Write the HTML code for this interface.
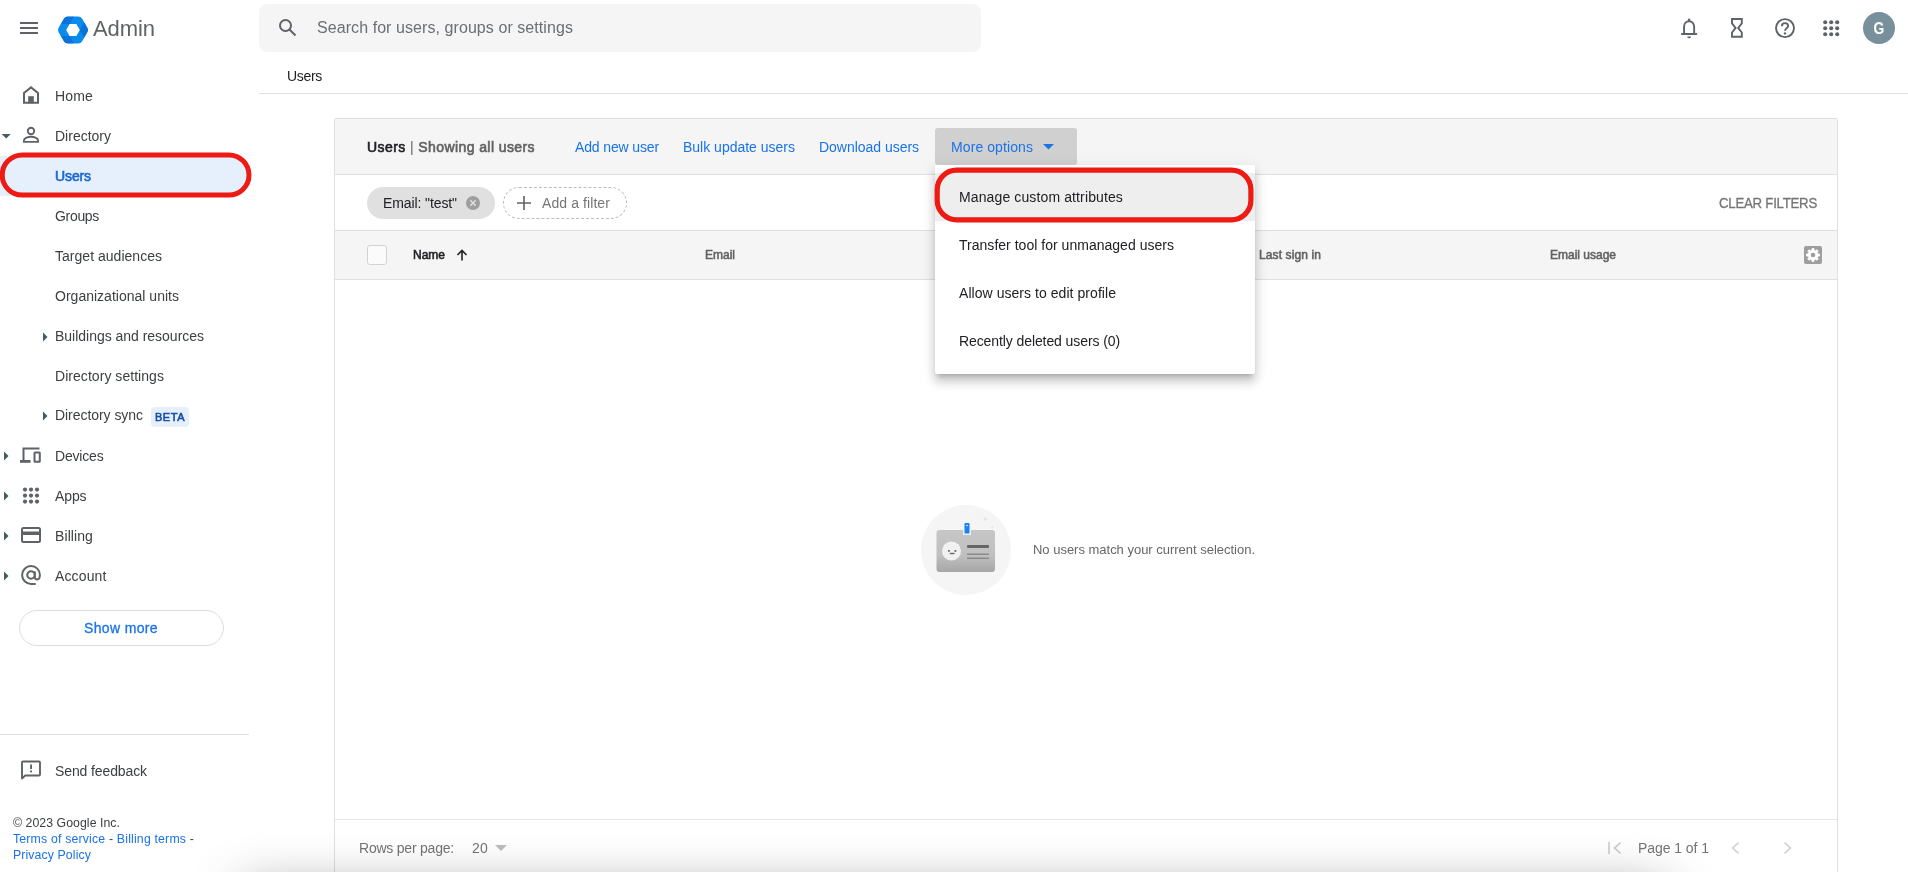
<!DOCTYPE html>
<html><head><meta charset="utf-8">
<style>
*{box-sizing:border-box;margin:0;padding:0}
html,body{width:1908px;height:872px;overflow:hidden;background:#fff;font-family:"Liberation Sans",sans-serif;color:#3c4043}
.abs{position:absolute}
.t{position:absolute;white-space:nowrap;line-height:1}
svg{position:absolute;overflow:visible}
.nav{font-size:14px;color:#3c4043}
.link{color:#1a73e8;font-size:14px}
.hdr{font-size:12px;color:#616161;-webkit-text-stroke:.55px currentColor}
.med{-webkit-text-stroke:.6px currentColor}
.mi{font-size:14px;color:#202124}
#root{position:absolute;left:0;top:0;width:1908px;height:872px;will-change:transform;overflow:hidden}
</style></head><body><div id="root">
<!-- top bar -->
<svg style="left:20px;top:22px" width="18" height="12"><path d="M0 1h18M0 6h18M0 11h18" stroke="#5f6368" stroke-width="2"/></svg>
<svg id="logo" style="left:57px;top:14.900px" width="32" height="30" viewBox="0 0 32 30"><defs><clipPath id="lc"><path d="M1.60 17.25Q0.30 15.00 1.60 12.75L6.85 3.66Q8.15 1.40 10.75 1.40L21.25 1.40Q23.85 1.40 25.15 3.66L30.40 12.75Q31.70 15.00 30.40 17.25L25.15 26.34Q23.85 28.60 21.25 28.60L10.75 28.60Q8.15 28.60 6.85 26.34Z"/></clipPath></defs><g clip-path="url(#lc)"><rect width="32" height="30" fill="#0c8bef"/><path d="M8.15 1.40L17.05 1.40L12.60 9.11L3.70 9.11Z M31.70 15.00L27.25 22.71L22.80 15.00L27.25 7.29Z M8.15 28.60L3.70 20.89L12.60 20.89L17.05 28.60Z" fill="#0a72d8"/></g><path d="M9.20 15.00L12.60 9.11L19.40 9.11L22.80 15.00L19.40 20.89L12.60 20.89Z" fill="#fff"/></svg>
<div class="t" style="letter-spacing:-0.072px;left:93px;top:18px;font-size:22px;color:#5f6368">Admin</div>
<div class="abs" style="left:259px;top:4px;width:722px;height:48px;background:#f5f5f5;border-radius:8px"></div>
<svg style="left:278px;top:18px" width="20" height="20" viewBox="0 0 20 20"><circle cx="7.5" cy="7.5" r="5.5" fill="none" stroke="#5f6368" stroke-width="2"/><path d="M11.5 11.5l6 6" stroke="#5f6368" stroke-width="2"/></svg>
<div class="t" style="letter-spacing:0.071px;left:317px;top:20px;font-size:16px;color:#6b6f73">Search for users, groups or settings</div>

<!-- top-right icons -->
<svg id="bell" style="left:1679px;top:17px" width="20" height="22" viewBox="0 0 20 22"><path d="M10.100 4.200c-3 0-5.050 2.400-5.050 5.600V17h10.100V9.800c0-3.200-2.050-5.600-5.050-5.600z" fill="none" stroke="#5f6368" stroke-width="1.900"/><path d="M2.100 17h16" stroke="#5f6368" stroke-width="1.900"/><circle cx="10.100" cy="2.700" r="1.300" fill="#5f6368"/><path d="M8.200 19.400h3.800a1.900 1.900 0 0 1-3.800 0z" fill="#5f6368"/></svg>
<svg id="hour" style="left:1731.300px;top:18.200px" width="12" height="20" viewBox="0 0 12 20"><path d="M1 1h9.800v4.300l-3.600 4.600 3.600 4.600v4.300H1v-4.300l3.600-4.600L1 5.300z" fill="none" stroke="#5f6368" stroke-width="1.900" stroke-linejoin="miter"/></svg>
<svg id="help" style="left:1774px;top:18px" width="22" height="22" viewBox="0 0 22 22"><circle cx="11" cy="10.100" r="9" fill="none" stroke="#5f6368" stroke-width="1.900"/><path d="M7.900 8.200c0-1.900 1.400-3.100 3.100-3.100s3.100 1.200 3.100 2.800c0 2.200-3.100 2.500-3.100 4.900" fill="none" stroke="#5f6368" stroke-width="1.900"/><circle cx="11" cy="15.400" r="1.200" fill="#5f6368"/></svg>
<svg id="grid" style="left:1822px;top:19px" width="18" height="18" viewBox="0 0 18 18" fill="#5f6368"><circle cx="3.2" cy="3.2" r="2.050"/><circle cx="9.2" cy="3.2" r="2.050"/><circle cx="15.2" cy="3.2" r="2.050"/><circle cx="3.2" cy="9.2" r="2.050"/><circle cx="9.2" cy="9.2" r="2.050"/><circle cx="15.2" cy="9.2" r="2.050"/><circle cx="3.2" cy="15.2" r="2.050"/><circle cx="9.2" cy="15.2" r="2.050"/><circle cx="15.2" cy="15.2" r="2.050"/></svg>
<div class="abs" style="left:1863px;top:12px;width:32px;height:32px;border-radius:50%;background:#78909c"></div>
<div class="abs" style="left:1863px;top:12px;width:32px;height:32px;line-height:32px;text-align:center;font-size:16.500px;font-weight:bold;color:#fff;transform:scaleX(.84)">G</div>

<!-- breadcrumb -->
<div class="t" style="letter-spacing:-0.312px;left:287px;top:69px;font-size:14px;color:#202124">Users</div>
<div class="abs" style="left:259px;top:93px;width:1649px;height:1px;background:#e0e0e0"></div>

<!-- sidebar -->

<!-- Users highlight -->
<div class="abs" style="left:0;top:156px;width:248px;height:40px;background:#e5f0fc;border-radius:0 20px 20px 0"></div>
<svg style="left:0;top:150px" width="256" height="50"><rect x="2.2" y="4.900" width="246.800" height="40.200" rx="20.100" fill="none" stroke="#ee1a14" stroke-width="5"/></svg>
<!-- Home -->
<svg id="home" style="left:23px;top:86px" width="16" height="18" viewBox="0 0 16 18"><path d="M1 16.700V7L8 1.400l7 5.600v9.700z" fill="none" stroke="#5f6368" stroke-width="2" stroke-linejoin="miter"/><rect x="5.200" y="10.200" width="5.600" height="7" fill="#5f6368"/></svg>
<div class="t nav" style="letter-spacing:0.160px;left:55px;top:89px">Home</div>
<!-- Directory -->
<svg style="left:1px;top:134px" width="11" height="5"><path d="M.7 0h9L5.200 4.500z" fill="#455a64"/></svg>
<svg id="person" style="left:22px;top:126px" width="18" height="18" viewBox="0 0 18 18"><circle cx="9" cy="5" r="3.200" fill="none" stroke="#5f6368" stroke-width="1.900"/><path d="M1.900 15.900v-1.400c0-2.500 4.700-3.700 7.100-3.700s7.100 1.200 7.100 3.700v1.400z" fill="none" stroke="#5f6368" stroke-width="1.900" stroke-linejoin="round"/></svg>
<div class="t nav" style="letter-spacing:-0.002px;left:55px;top:129px">Directory</div>
<div class="t" style="letter-spacing:-0.113px;left:55px;top:169px;font-size:14px;color:#1967d2;-webkit-text-stroke:.6px #1967d2">Users</div>
<div class="t nav" style="letter-spacing:-0.320px;left:55px;top:209px">Groups</div>
<div class="t nav" style="letter-spacing:0.022px;left:55px;top:249px">Target audiences</div>
<div class="t nav" style="letter-spacing:0.013px;left:55px;top:289px">Organizational units</div>
<svg style="left:43px;top:332px" width="5" height="10"><path d="M0 .5v9l4.500-4.500z" fill="#455a64"/></svg>
<div class="t nav" style="letter-spacing:-0.018px;left:55px;top:329px">Buildings and resources</div>
<div class="t nav" style="letter-spacing:0.047px;left:55px;top:369px">Directory settings</div>
<svg style="left:43px;top:411px" width="5" height="10"><path d="M0 .5v9l4.500-4.500z" fill="#455a64"/></svg>
<div class="t nav" style="letter-spacing:-0.049px;left:55px;top:408px">Directory sync</div>
<div class="abs" style="left:151px;top:407px;width:38px;height:20px;background:#e5f0fc;border-radius:4px"></div>
<div class="t" style="letter-spacing:0.520px;left:155px;top:412px;font-size:11px;color:#1449a8;-webkit-text-stroke:.55px #1449a8">BETA</div>
<!-- Devices -->
<svg style="left:4px;top:451px" width="5" height="10"><path d="M0 .5v9l4.500-4.500z" fill="#455a64"/></svg>
<svg id="dev" style="left:20px;top:447px" width="22" height="17" viewBox="0 0 22 17"><path d="M3.500 13V1.500H19.500" fill="none" stroke="#5f6368" stroke-width="2"/><path d="M0 14.400h10.500" stroke="#5f6368" stroke-width="2.800"/><rect x="14.500" y="5.600" width="5.300" height="9.200" rx=".5" fill="none" stroke="#5f6368" stroke-width="2"/></svg>
<div class="t nav" style="letter-spacing:-0.185px;left:55px;top:449px">Devices</div>
<!-- Apps -->
<svg style="left:4px;top:491px" width="5" height="10"><path d="M0 .5v9l4.500-4.500z" fill="#455a64"/></svg>
<svg id="apps" style="left:22px;top:487px" width="18" height="18" viewBox="0 0 18 18" fill="#5f6368"><circle cx="3.0" cy="2.6" r="2.100"/><circle cx="9.0" cy="2.6" r="2.100"/><circle cx="15.0" cy="2.6" r="2.100"/><circle cx="3.0" cy="8.6" r="2.100"/><circle cx="9.0" cy="8.6" r="2.100"/><circle cx="15.0" cy="8.6" r="2.100"/><circle cx="3.0" cy="14.6" r="2.100"/><circle cx="9.0" cy="14.6" r="2.100"/><circle cx="15.0" cy="14.6" r="2.100"/></svg>
<div class="t nav" style="letter-spacing:-0.105px;left:55px;top:489px">Apps</div>
<!-- Billing -->
<svg style="left:4px;top:531px" width="5" height="10"><path d="M0 .5v9l4.500-4.500z" fill="#455a64"/></svg>
<svg id="bill" style="left:21px;top:527px" width="20" height="16" viewBox="0 0 20 16"><rect x="1" y="1" width="18" height="14" rx="1.500" fill="none" stroke="#5f6368" stroke-width="2"/><rect x="1" y="4.500" width="18" height="3.500" fill="#5f6368"/></svg>
<div class="t nav" style="letter-spacing:0.092px;left:55px;top:529px">Billing</div>
<!-- Account -->
<svg style="left:4px;top:571px" width="5" height="10"><path d="M0 .5v9l4.500-4.500z" fill="#455a64"/></svg>
<svg id="acct" style="left:20px;top:564px" width="22" height="22" viewBox="-0.5 -0.5 21 21"><circle cx="10" cy="10" r="3.600" fill="none" stroke="#5f6368" stroke-width="1.900"/><path d="M13.600 6.500v5.200c0 1.600 1 2.500 2.300 2.500 1.500 0 2.600-1.300 2.600-4.200 0-4.800-3.800-8.500-8.500-8.500S1.500 5.300 1.500 10s3.800 8.500 8.500 8.500h4.500" fill="none" stroke="#5f6368" stroke-width="1.900"/></svg>
<div class="t nav" style="letter-spacing:0.129px;left:55px;top:569px">Account</div>
<!-- Show more -->
<div class="abs" style="left:19px;top:610px;width:205px;height:36px;border:1px solid #dadce0;border-radius:18px"></div>
<div class="t" style="letter-spacing:0.354px;left:84px;top:621px;font-size:14px;color:#1a73e8;-webkit-text-stroke:.3px #1a73e8">Show more</div>
<!-- divider -->
<div class="abs" style="left:0;top:734px;width:249px;height:1px;background:#e0e0e0"></div>
<svg id="fb" style="left:21px;top:760px" width="20" height="20" viewBox="0 0 20 20"><path d="M1 18.500V2.500a1 1 0 0 1 1-1h16a1 1 0 0 1 1 1v12a1 1 0 0 1-1 1H4.200z" fill="none" stroke="#5f6368" stroke-width="1.900" stroke-linejoin="round"/><rect x="9.100" y="4.500" width="1.900" height="4.500" fill="#5f6368"/><rect x="9.100" y="10.500" width="1.900" height="1.900" fill="#5f6368"/></svg>
<div class="t nav" style="letter-spacing:-0.108px;left:55px;top:764px">Send feedback</div>
<div class="t" style="letter-spacing:0.048px;left:13px;top:817px;font-size:12.300px;color:#3c4043">© 2023 Google Inc.</div>
<div class="t" style="letter-spacing:0.178px;left:13px;top:833px;font-size:12.300px;color:#3c4043"><span style="color:#1a73e8">Terms of service</span> - <span style="color:#1a73e8">Billing terms</span> -</div>
<div class="t" style="letter-spacing:0.104px;left:13px;top:849px;font-size:12.300px;color:#1a73e8">Privacy Policy</div>


<!-- main card -->

<div class="abs" style="left:334px;top:118px;width:1504px;height:760px;border:1px solid #e0e0e0;border-radius:2px 2px 0 0;background:#fff"></div>
<div class="abs" style="left:335px;top:119px;width:1502px;height:55px;background:#f5f5f5"></div>
<div class="abs" style="left:335px;top:174px;width:1502px;height:1px;background:#e0e0e0"></div>
<div class="abs" style="left:335px;top:230px;width:1502px;height:1px;background:#e0e0e0"></div>
<div class="abs" style="left:335px;top:231px;width:1502px;height:48px;background:#f5f5f5"></div>
<div class="abs" style="left:335px;top:279px;width:1502px;height:1px;background:#e0e0e0"></div>
<div class="abs" style="left:335px;top:819px;width:1502px;height:1px;background:#e6e6e6"></div>
<!-- header row -->
<div class="t" style="letter-spacing:0.411px;left:367px;top:140px;font-size:14px;color:#616161"><span class="med" style="color:#202124">Users</span> | <span class="med">Showing all users</span></div>
<div class="t link" style="letter-spacing:-0.134px;left:575px;top:140px">Add new user</div>
<div class="t link" style="letter-spacing:-0.005px;left:683px;top:140px">Bulk update users</div>
<div class="t link" style="letter-spacing:-0.028px;left:819px;top:140px">Download users</div>
<div class="abs" style="left:935px;top:128px;width:142px;height:37px;background:#d0d0d0;border-radius:3px"></div>
<div class="t link" style="letter-spacing:0.089px;left:951px;top:140px">More options</div>
<svg style="left:1043px;top:144px" width="11" height="6"><path d="M0 0h11L5.500 5.500z" fill="#1a73e8"/></svg>
<!-- filter row -->
<div class="abs" style="left:367px;top:187px;width:128px;height:32px;background:#e0e0e0;border-radius:16px"></div>
<div class="t" style="letter-spacing:-0.100px;left:383px;top:196px;font-size:14px;color:#202124">Email: "test"</div>
<svg style="left:466px;top:196px" width="14" height="14" viewBox="0 0 14 14"><circle cx="7" cy="7" r="7" fill="#9e9e9e"/><path d="M4.300 4.300l5.400 5.400M9.700 4.300l-5.400 5.400" stroke="#e0e0e0" stroke-width="1.500"/></svg>
<div class="abs" style="left:503px;top:187px;width:124px;height:32px;border:1px dashed #bdbdbd;border-radius:16px"></div>
<svg style="left:517px;top:196px" width="14" height="14"><path d="M7 0v14M0 7h14" stroke="#616161" stroke-width="1.600"/></svg>
<div class="t" style="letter-spacing:0.089px;left:542px;top:196px;font-size:14px;color:#757575">Add a filter</div>
<div class="t" style="letter-spacing:-0.250px;transform:scaleX(0.9436);transform-origin:0 0;left:1719px;top:196px;font-size:14px;color:#757575;font-weight:normal;-webkit-text-stroke:.3px #757575">CLEAR FILTERS</div>
<!-- table header -->
<div class="abs" style="left:367px;top:245px;width:20px;height:20px;border:1.500px solid #d2d2d2;border-radius:3px;background:#fbfbfb"></div>
<div class="t hdr" style="letter-spacing:-0.004px;left:413px;top:249px;color:#202124">Name</div>
<svg style="left:456px;top:249px" width="12" height="12" viewBox="0 0 12 12"><path d="M6 11.500V1.500M1.500 6L6 1.500 10.500 6" fill="none" stroke="#202124" stroke-width="1.600"/></svg>
<div class="t hdr" style="letter-spacing:-0.003px;left:705px;top:249px">Email</div>
<div class="t hdr" style="letter-spacing:0.108px;left:1259px;top:249px">Last sign in</div>
<div class="t hdr" style="letter-spacing:-0.004px;left:1550px;top:249px">Email usage</div>
<svg id="gear" style="left:1804px;top:246px" width="18" height="18" viewBox="0 0 18 18"><rect width="18" height="18" rx="2" fill="#9e9e9e"/><path d="M13.76 7.86L15.53 8.02L15.53 9.98L13.76 10.14L13.18 11.56L14.31 12.92L12.92 14.31L11.56 13.18L10.14 13.76L9.98 15.53L8.02 15.53L7.86 13.76L6.44 13.18L5.08 14.31L3.69 12.92L4.82 11.56L4.24 10.14L2.47 9.98L2.47 8.02L4.24 7.86L4.82 6.44L3.69 5.08L5.08 3.69L6.44 4.82L7.86 4.24L8.02 2.47L9.98 2.47L10.14 4.24L11.56 4.82L12.92 3.69L14.31 5.08L13.18 6.44Z" fill="#fff" stroke="#fff" stroke-width=".8" stroke-linejoin="round"/><circle cx="9" cy="9" r="2.300" fill="#9e9e9e"/></svg>
<!-- dropdown -->
<div class="abs" style="left:935px;top:165px;width:320px;height:209px;background:#fff;border-radius:2px;box-shadow:0 5px 5px -3px rgba(0,0,0,.2),0 8px 10px 1px rgba(0,0,0,.14),0 3px 14px 2px rgba(0,0,0,.08)"></div>
<div class="abs" style="left:935px;top:173px;width:320px;height:48px;background:#eeeeee"></div>
<svg style="left:930px;top:160px" width="330" height="70"><rect x="7.200" y="10.100" width="313.700" height="49.700" rx="19.500" fill="none" stroke="#ee1a14" stroke-width="5.200"/></svg>
<div class="t mi" style="letter-spacing:0.121px;left:959px;top:190px">Manage custom attributes</div>
<div class="t mi" style="letter-spacing:0.022px;left:959px;top:238px">Transfer tool for unmanaged users</div>
<div class="t mi" style="letter-spacing:0.050px;left:959px;top:286px">Allow users to edit profile</div>
<div class="t mi" style="letter-spacing:-0.093px;left:959px;top:334px">Recently deleted users (0)</div>
<!-- empty state -->
<div class="abs" style="left:921px;top:505px;width:90px;height:90px;border-radius:50%;background:#f5f5f5"></div>
<svg style="left:982px;top:516px" width="14" height="14" viewBox="0 0 14 14"><path d="M3.300 .8l.7 1.800 1.800.7-1.800.7-.7 1.800-.7-1.800L.8 3.300l1.800-.7z" fill="#e2e2e2"/><circle cx="10.300" cy="10.900" r="1" fill="#e4e4e4"/></svg>

<svg style="left:936px;top:522px" width="60" height="52" viewBox="0 0 60 52"><defs><linearGradient id="cg" x1="0" y1="0" x2="0" y2="1"><stop offset="0" stop-color="#c6c6c6"/><stop offset=".6" stop-color="#c0c0c0"/><stop offset="1" stop-color="#a6a6a6"/></linearGradient></defs><rect x="0.500" y="8" width="58.500" height="42" rx="3" fill="url(#cg)"/><rect x="27" y="8" width="8" height="5" fill="#eee"/><rect x="28.500" y="1" width="5" height="10.500" rx=".8" fill="#1a83ee"/><circle cx="31" cy="3.500" r=".8" fill="#fff"/><circle cx="15.500" cy="29" r="9.500" fill="#f1f1f1"/><rect x="12" y="28" width="1.800" height="1.800" fill="#666"/><rect x="18.500" y="28" width="1.800" height="1.800" fill="#666"/><rect x="13.800" y="30.800" width="4.700" height="1.400" fill="#666"/><rect x="31" y="23" width="22" height="3" rx="1" fill="#666"/><rect x="31" y="31.500" width="22" height="1.500" fill="#8a8a8a"/><rect x="31" y="35.500" width="22" height="1.500" fill="#8a8a8a"/></svg>
<div class="t" style="letter-spacing:-0.014px;left:1033px;top:543px;font-size:13px;color:#666">No users match your current selection.</div>
<!-- footer -->
<div class="t" style="letter-spacing:-0.219px;left:359px;top:841px;font-size:14px;color:#757575">Rows per page:</div>
<div class="t" style="letter-spacing:0.211px;left:472px;top:841px;font-size:14px;color:#757575">20</div>
<svg style="left:495px;top:845px" width="12" height="7"><path d="M0 0h12L6 6z" fill="#bdbdbd"/></svg>
<svg style="left:1608px;top:842px" width="14" height="12" viewBox="0 0 14 12"><path d="M1 0v12" stroke="#cfcfcf" stroke-width="1.700"/><path d="M12.500 .7L6.500 6l6 5.300" fill="none" stroke="#cfcfcf" stroke-width="1.700"/></svg>
<div class="t" style="letter-spacing:-0.057px;left:1638px;top:841px;font-size:14px;color:#757575">Page 1 of 1</div>
<svg style="left:1731px;top:842px" width="9" height="12" viewBox="0 0 9 12"><path d="M7.500 .7L1.500 6l6 5.300" fill="none" stroke="#d4d4d4" stroke-width="1.700"/></svg>
<svg style="left:1783px;top:842px" width="9" height="12" viewBox="0 0 9 12"><path d="M1.500 .7L7.500 6l-6 5.300" fill="none" stroke="#d4d4d4" stroke-width="1.700"/></svg>
<!-- bottom shadow -->
<div class="abs" style="left:242px;top:890px;width:1424px;height:100px;box-shadow:0 0 52px rgba(0,0,0,.42)"></div>

</div></body></html>
